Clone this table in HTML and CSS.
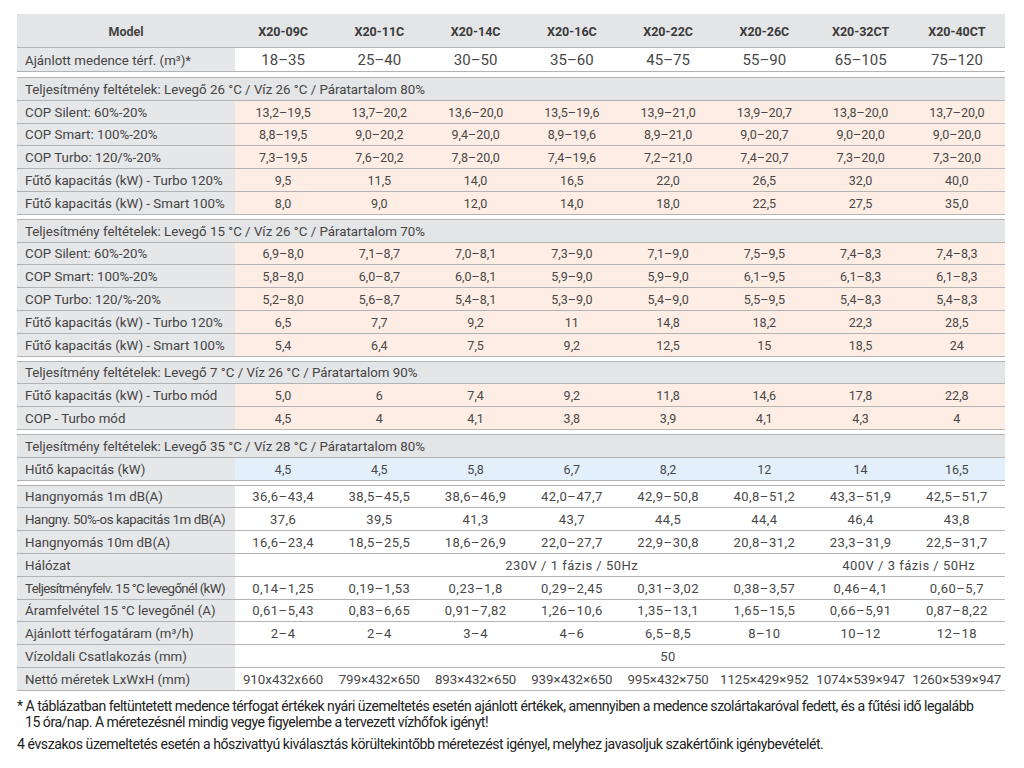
FILE: index.html
```html
<!DOCTYPE html>
<html lang="hu">
<head>
<meta charset="utf-8">
<title>X20 specifikáció</title>
<link rel="stylesheet" href="styles.css">
</head>
<body>
<div class="spec">
  <div class="group first">
    <div class="row head">
      <div class="lbl">Model</div>
      <div>X20-09C</div><div>X20-11C</div><div>X20-14C</div><div>X20-16C</div><div>X20-22C</div><div>X20-26C</div><div>X20-32CT</div><div>X20-40CT</div>
    </div>
    <div class="row big">
      <div class="lbl">Ajánlott medence térf. (m³)*</div>
      <div>18–35</div><div>25–40</div><div>30–50</div><div>35–60</div><div>45–75</div><div>55–90</div><div>65–105</div><div>75–120</div>
    </div>
  </div>

  <div class="group warm">
    <div class="row sect"><div>Teljesítmény feltételek: Levegő 26 °C / Víz 26 °C / Páratartalom 80%</div></div>
    <div class="row"><div class="lbl">COP Silent: 60%-20%</div><div>13,2–19,5</div><div>13,7–20,2</div><div>13,6–20,0</div><div>13,5–19,6</div><div>13,9–21,0</div><div>13,9–20,7</div><div>13,8–20,0</div><div>13,7–20,0</div></div>
    <div class="row"><div class="lbl">COP Smart: 100%-20%</div><div>8,8–19,5</div><div>9,0–20,2</div><div>9,4–20,0</div><div>8,9–19,6</div><div>8,9–21,0</div><div>9,0–20,7</div><div>9,0–20,0</div><div>9,0–20,0</div></div>
    <div class="row"><div class="lbl">COP Turbo: 120/%-20%</div><div>7,3–19,5</div><div>7,6–20,2</div><div>7,8–20,0</div><div>7,4–19,6</div><div>7,2–21,0</div><div>7,4–20,7</div><div>7,3–20,0</div><div>7,3–20,0</div></div>
    <div class="row"><div class="lbl">Fűtő kapacitás (kW) - Turbo 120%</div><div>9,5</div><div>11,5</div><div>14,0</div><div>16,5</div><div>22,0</div><div>26,5</div><div>32,0</div><div>40,0</div></div>
    <div class="row"><div class="lbl">Fűtő kapacitás (kW) - Smart 100%</div><div>8,0</div><div>9,0</div><div>12,0</div><div>14,0</div><div>18,0</div><div>22,5</div><div>27,5</div><div>35,0</div></div>
  </div>

  <div class="group warm">
    <div class="row sect"><div>Teljesítmény feltételek: Levegő 15 °C / Víz 26 °C / Páratartalom 70%</div></div>
    <div class="row"><div class="lbl">COP Silent: 60%-20%</div><div>6,9–8,0</div><div>7,1–8,7</div><div>7,0–8,1</div><div>7,3–9,0</div><div>7,1–9,0</div><div>7,5–9,5</div><div>7,4–8,3</div><div>7,4–8,3</div></div>
    <div class="row"><div class="lbl">COP Smart: 100%-20%</div><div>5,8–8,0</div><div>6,0–8,7</div><div>6,0–8,1</div><div>5,9–9,0</div><div>5,9–9,0</div><div>6,1–9,5</div><div>6,1–8,3</div><div>6,1–8,3</div></div>
    <div class="row"><div class="lbl">COP Turbo: 120/%-20%</div><div>5,2–8,0</div><div>5,6–8,7</div><div>5,4–8,1</div><div>5,3–9,0</div><div>5,4–9,0</div><div>5,5–9,5</div><div>5,4–8,3</div><div>5,4–8,3</div></div>
    <div class="row"><div class="lbl">Fűtő kapacitás (kW) - Turbo 120%</div><div>6,5</div><div>7,7</div><div>9,2</div><div>11</div><div>14,8</div><div>18,2</div><div>22,3</div><div>28,5</div></div>
    <div class="row"><div class="lbl">Fűtő kapacitás (kW) - Smart 100%</div><div>5,4</div><div>6,4</div><div>7,5</div><div>9,2</div><div>12,5</div><div>15</div><div>18,5</div><div>24</div></div>
  </div>

  <div class="group warm">
    <div class="row sect"><div>Teljesítmény feltételek: Levegő 7 °C / Víz 26 °C / Páratartalom 90%</div></div>
    <div class="row"><div class="lbl">Fűtő kapacitás (kW) - Turbo mód</div><div>5,0</div><div>6</div><div>7,4</div><div>9,2</div><div>11,8</div><div>14,6</div><div>17,8</div><div>22,8</div></div>
    <div class="row"><div class="lbl">COP - Turbo mód</div><div>4,5</div><div>4</div><div>4,1</div><div>3,8</div><div>3,9</div><div>4,1</div><div>4,3</div><div>4</div></div>
  </div>

  <div class="group cool">
    <div class="row sect"><div>Teljesítmény feltételek: Levegő 35 °C / Víz 28 °C / Páratartalom 80%</div></div>
    <div class="row"><div class="lbl">Hűtő kapacitás (kW)</div><div>4,5</div><div>4,5</div><div>5,8</div><div>6,7</div><div>8,2</div><div>12</div><div>14</div><div>16,5</div></div>
  </div>

  <div class="group plain">
    <div class="row"><div class="lbl">Hangnyomás 1m dB(A)</div><div>36,6–43,4</div><div>38,5–45,5</div><div>38,6–46,9</div><div>42,0–47,7</div><div>42,9–50,8</div><div>40,8–51,2</div><div>43,3–51,9</div><div>42,5–51,7</div></div>
    <div class="row"><div class="lbl tight">Hangny. 50%-os kapacitás 1m dB(A)</div><div>37,6</div><div>39,5</div><div>41,3</div><div>43,7</div><div>44,5</div><div>44,4</div><div>46,4</div><div>43,8</div></div>
    <div class="row"><div class="lbl">Hangnyomás 10m dB(A)</div><div>16,6–23,4</div><div>18,5–25,5</div><div>18,6–26,9</div><div>22,0–27,7</div><div>22,9–30,8</div><div>20,8–31,2</div><div>23,3–31,9</div><div>22,5–31,7</div></div>
    <div class="row"><div class="lbl">Hálózat</div><div class="span6">230V / 1 fázis / 50Hz</div><div class="span2">400V / 3 fázis / 50Hz</div></div>
    <div class="row"><div class="lbl tighter">Teljesítményfelv. 15 °C levegőnél (kW)</div><div>0,14–1,25</div><div>0,19–1,53</div><div>0,23–1,8</div><div>0,29–2,45</div><div>0,31–3,02</div><div>0,38–3,57</div><div>0,46–4,1</div><div>0,60–5,7</div></div>
    <div class="row"><div class="lbl">Áramfelvétel 15 °C levegőnél (A)</div><div>0,61–5,43</div><div>0,83–6,65</div><div>0,91–7,82</div><div>1,26–10,6</div><div>1,35–13,1</div><div>1,65–15,5</div><div>0,66–5,91</div><div>0,87–8,22</div></div>
    <div class="row"><div class="lbl">Ajánlott térfogatáram (m³/h)</div><div>2–4</div><div>2–4</div><div>3–4</div><div>4–6</div><div>6,5–8,5</div><div>8–10</div><div>10–12</div><div>12–18</div></div>
    <div class="row"><div class="lbl">Vízoldali Csatlakozás (mm)</div><div class="span8">50</div></div>
    <div class="row dims"><div class="lbl">Nettó méretek LxWxH (mm)</div><div>910x432x660</div><div>799×432×650</div><div>893×432×650</div><div>939×432×650</div><div>995×432×750</div><div>1125×429×952</div><div>1074×539×947</div><div>1260×539×947</div></div>
  </div>
</div>

<div class="notes">
  <p class="hang">* A táblázatban feltüntetett medence térfogat értékek nyári üzemeltetés esetén ajánlott értékek, amennyiben a medence szolártakaróval fedett, és a fűtési idő legalább<br>15 óra/nap. A méretezésnél mindig vegye figyelembe a tervezett vízhőfok igényt!</p>
  <p>4 évszakos üzemeltetés esetén a hőszivattyú kiválasztás körültekintőbb méretezést igényel, melyhez javasoljuk szakértőink igénybevételét.</p>
</div>
</body>
</html>
```

FILE: styles.css
```css
html, body {
  margin: 0;
  padding: 0;
  background: #ffffff;
}

body {
  padding: 14px 19px 0 17px;
  font-family: Roboto, "Liberation Sans", sans-serif;
  color: #474747;
}

.spec {
  display: flex;
  flex-direction: column;
  gap: 4px;
  width: 988px;
}

.group {
  border-top: 1px solid #b3b3b3;
}

.group.first {
  border-top: none;
  margin-bottom: 1px;
}

.row {
  display: grid;
  grid-template-columns: 218px repeat(8, 1fr);
  height: 22.8px;
  box-sizing: border-box;
  border-bottom: 1px solid #b3b3b3;
  font-size: 12.5px;
}

.row > div {
  display: flex;
  align-items: center;
  justify-content: center;
  white-space: nowrap;
  overflow: visible;
  padding-top: 1px;
}

.row > .lbl {
  justify-content: flex-start;
  padding-left: 8px;
  background: #e6e7e9;
  color: #444;
  font-size: 13.3px;
}

.row.head {
  height: 34px;
  background: #e4e5e7;
  font-weight: 700;
  font-size: 12.5px;
  color: #3a3a3a;
}

.row.head > .lbl {
  justify-content: center;
  padding-left: 0;
  background: transparent;
  font-size: 12.5px;
}

.row.big {
  height: 24px;
  font-size: 15px;
}

.row.sect {
  display: flex;
  background: #e4e5e7;
  font-size: 13.3px;
}

.row.sect > div {
  padding-left: 8px;
  color: #444;
}

.warm .row:not(.sect) > div:not(.lbl) {
  background: #fdede4;
}

.cool .row:not(.sect) > div:not(.lbl) {
  background: #e3f0fb;
}

.plain .row > div:not(.lbl) {
  font-size: 13px;
  letter-spacing: 0.5px;
}

.plain .row > .span6,
.plain .row > .span2 {
  font-size: 13.4px;
  letter-spacing: 0;
}

.span6 {
  grid-column: span 6;
  padding-left: 96px;
}

.span2 {
  grid-column: span 2;
}

.span8 {
  grid-column: span 8;
  padding-left: 96px;
}

.lbl.tight {
  letter-spacing: -0.42px;
}

.lbl.tighter {
  letter-spacing: -0.65px;
}

.plain .dims > div:not(.lbl) {
  font-size: 13.3px;
  letter-spacing: 0;
}

.notes {
  width: 1000px;
  margin-top: 7px;
  font-size: 14.1px;
  line-height: 16px;
  color: #222;
  letter-spacing: -0.45px;
  white-space: nowrap;
}

.notes p {
  margin: 0 0 6px 0;
}

.notes .hang {
  padding-left: 8px;
  text-indent: -8px;
  letter-spacing: -0.5px;
}
```
